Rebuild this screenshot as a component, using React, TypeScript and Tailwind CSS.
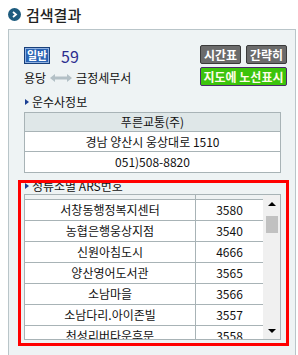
const font = { fontFamily: '"Noto Sans CJK KR", "Noto Sans", sans-serif' };

const arsRows: [string, string][] = [
  ["서창동행정복지센터", "3580"],
  ["농협은행웅상지점", "3540"],
  ["신원아침도시", "4666"],
  ["양산영어도서관", "3565"],
  ["소남마을", "3566"],
  ["소남다리.아이존빌", "3557"],
  ["천성리버타운후문", "3558"],
];

function Tri() {
  return <span className="w-0 h-0 border-y-[3px] border-y-transparent border-l-[4px] border-l-[#1b3f94] mr-[3px]" />;
}

function Heading({ label }: { label: string }) {
  return (
    <div className="h-[16px] flex items-center pl-[1px] text-[12px] leading-none text-[#111]">
      <Tri />
      {label}
    </div>
  );
}

export default function App() {
  return (
    <div className="w-[298px] h-[355px] overflow-hidden bg-white" style={font}>
      <div className="h-[29px] flex items-center pl-[8px] pb-[1px]">
        <span className="w-[13px] h-[13px] rounded-full bg-[#1d5b7e] flex items-center justify-center mr-[5px]">
          <svg width="7" height="7" viewBox="0 0 7 7">
            <path d="M2 1 L5 3.5 L2 6" stroke="#fff" strokeWidth="1.8" fill="none" />
          </svg>
        </span>
        <span className="text-[15px] font-medium text-[#222] leading-none">검색결과</span>
      </div>

      <div className="ml-[8px] w-[288px] h-[400px] border border-[#b9c5c9] bg-[#eef3f4] pt-[15px] pl-[15px] pr-[8px]">
        <div className="flex justify-between items-start">
          <div>
            <div className="flex items-center mt-[2px] h-[17px]">
              <span className="w-[26px] h-[17px] flex items-center justify-center bg-[#2a63b3] border border-[#173f7a] shadow-[inset_0_0_0_1px_#8fb0e0] text-white text-[11px] font-bold leading-none">
                일반
              </span>
              <span className="ml-[11px] text-[16px] text-[#2b2d8f] leading-none">59</span>
            </div>
            <div className="flex items-center mt-[7px] h-[14px] text-[12px] leading-none text-[#111]">
              용당
              <svg width="22" height="8" viewBox="0 0 22 8" className="mx-[4px]">
                <path d="M0 4 L5 0 L5 2.5 L17 2.5 L17 0 L22 4 L17 8 L17 5.5 L5 5.5 L5 8 Z" fill="#b3c0c6" />
              </svg>
              금정세무서
            </div>
          </div>
          <div className="flex flex-col items-end gap-[3px]">
            <div className="flex gap-[5px]">
              <span className="w-[41px] h-[19px] flex items-center justify-center bg-[#6b6b6b] border border-[#3a3a3a] rounded-[2px] text-white text-[12px] font-bold leading-none">
                시간표
              </span>
              <span className="w-[41px] h-[19px] flex items-center justify-center bg-[#6b6b6b] border border-[#3a3a3a] rounded-[2px] text-white text-[12px] font-bold leading-none">
                간략히
              </span>
            </div>
            <span className="w-[87px] h-[19px] flex items-center justify-center bg-[#3cc40c] border border-[#4a2a6a] rounded-[2px] text-[#fffde8] text-[12px] font-bold leading-none">
              지도에 노선표시
            </span>
          </div>
        </div>

        <div className="mt-[8px]">
          <Heading label="운수사정보" />
          <div className="mt-[2px] w-[257px] border border-[#a8b3b6] text-[12px] leading-none text-[#111]">
            <div className="h-[19px] flex items-center justify-center bg-[#dfe7e8] border-b border-[#a8b3b6]">푸른교통(주)</div>
            <div className="h-[20px] flex items-center justify-center bg-white border-b border-[#a8b3b6]">경남 양산시 웅상대로 1510</div>
            <div className="h-[20px] flex items-center justify-center bg-white">051)508-8820</div>
          </div>
        </div>

        <div className="mt-[7px] -ml-[6px] w-[271px] h-[166px] border-[3px] border-[#ff0000] overflow-hidden">
          <div className="-mt-[5px] pl-[3px]">
            <Heading label="정류소별 ARS번호" />
            <div className="w-[257px] h-[146px] border border-[#a8b3b6] flex overflow-hidden">
              <div className="w-[238px] text-[12px] leading-none text-[#111]">
                <div className="h-[5px] flex border-b border-[#a8b3b6] bg-[#eef2f3]">
                  <div className="w-[171px] border-r border-[#a8b3b6]" />
                </div>
                {arsRows.map(([name, no]) => (
                  <div key={no} className="h-[21px] flex bg-white border-b border-[#a8b3b6]">
                    <div className="w-[171px] flex items-center justify-center border-r border-[#a8b3b6]">{name}</div>
                    <div className="flex-1 flex items-center justify-center">{no}</div>
                  </div>
                ))}
              </div>
              <div className="w-[17px] bg-[#f0f0f0] flex flex-col items-center">
                <div className="h-[17px] flex items-center justify-center">
                  <span className="w-0 h-0 border-x-[4px] border-x-transparent border-b-[4px] border-b-black" />
                </div>
                <div className="mt-[4px] w-[12px] h-[17px] bg-[#c1c1c1]" />
                <div className="flex-1" />
                <div className="h-[17px] flex items-center justify-center">
                  <span className="w-0 h-0 border-x-[4px] border-x-transparent border-t-[4px] border-t-black" />
                </div>
              </div>
            </div>
          </div>
        </div>
      </div>
    </div>
  );
}
